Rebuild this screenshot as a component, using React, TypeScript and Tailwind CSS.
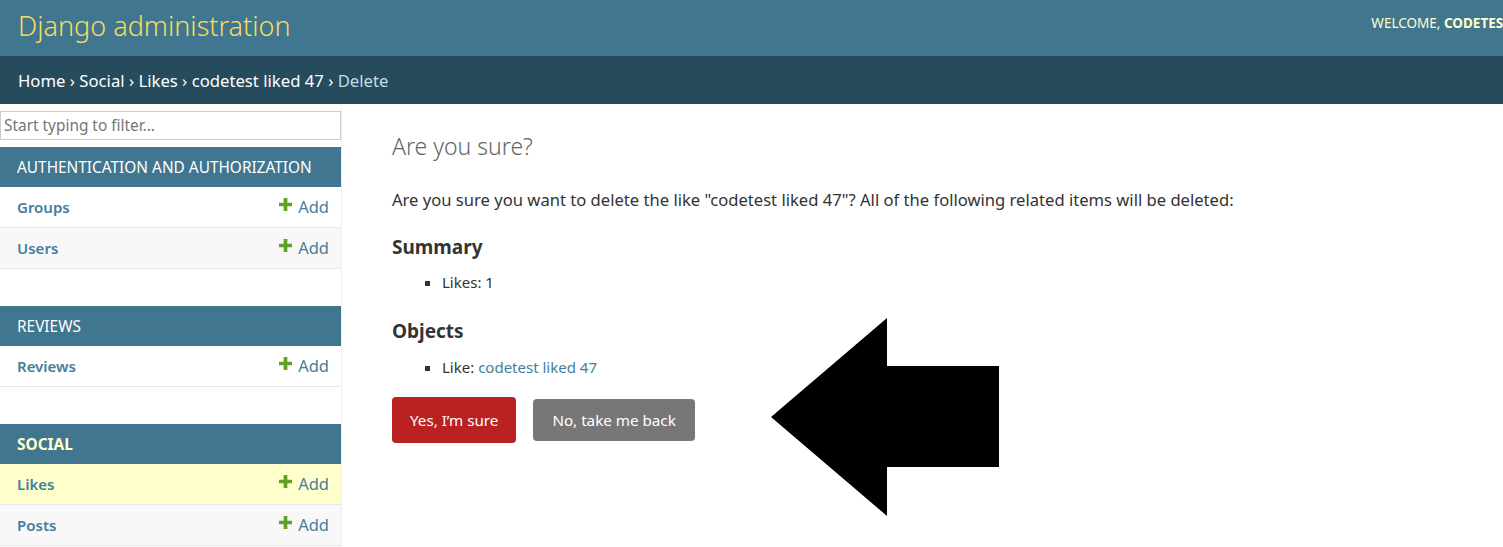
import React from "react";

const font = { fontFamily: '"Segoe UI", "Noto Sans", "Open Sans", sans-serif' };

interface ModelRow {
  name: string;
  current?: boolean;
}

interface AppSection {
  title: string;
  current?: boolean;
  models: ModelRow[];
}

const sections: AppSection[] = [
  {
    title: "Authentication and Authorization",
    models: [{ name: "Groups" }, { name: "Users" }],
  },
  { title: "Reviews", models: [{ name: "Reviews" }] },
  {
    title: "Social",
    current: true,
    models: [{ name: "Likes", current: true }, { name: "Posts" }],
  },
];

function Plus() {
  return (
    <svg width="13" height="13" viewBox="0 0 14 14" className="mr-[6px] -mt-[6px]">
      <path d="M5 0h4v5h5v4H9v5H5V9H0V5h5z" fill="#5fa225" />
    </svg>
  );
}

function Sidebar() {
  return (
    <div className="w-[342px] shrink-0 border-r border-[#eeeeee] pt-[7px]">
      <input
        className="block w-[341px] h-[29px] border border-[#cccccc] px-[3px] text-[15.4px] placeholder-[#757575] outline-none"
        placeholder="Start typing to filter..."
      />
      {sections.map((s, i) => (
        <div key={s.title} className={i === 0 ? "mt-[7px]" : "mt-[37px]"}>
          <div
            className={`h-[40px] bg-[#417690] flex items-center pl-[17px] pt-[1px] text-[15.4px] uppercase ${
              s.current ? "font-bold text-[#ffffcc]" : "text-white"
            }`}
          >
            {s.title}
          </div>
          {s.models.map((m, j) => (
            <div
              key={m.name}
              className={`h-[41px] flex items-center justify-between pl-[17px] pr-[12px] border-b border-[#e8e8e8] text-[15px] ${
                m.current ? "bg-[#ffffcc]" : j % 2 === 1 ? "bg-[#f8f8f8]" : "bg-white"
              }`}
            >
              <span className="font-semibold text-[#447e9b]">{m.name}</span>
              <span className="flex items-center text-[16.5px] text-[#447e9b]">
                <Plus />
                Add
              </span>
            </div>
          ))}
        </div>
      ))}
    </div>
  );
}

export default function App() {
  return (
    <div className="relative w-[1503px] h-[547px] overflow-hidden bg-white" style={font}>
      <div className="h-[56px] bg-[#417690] flex items-center justify-between pl-[18px] whitespace-nowrap">
        <h1 className="text-[27px] font-light text-[#f5dd5d] -mt-[4px]">Django administration</h1>
        <div className="text-[13.5px] text-[#ffffcc] -mt-[10px] -mr-[8px]">
          WELCOME, <strong>CODETEST</strong>
        </div>
      </div>
      <div className="h-[48px] bg-[#264b5d] flex items-center pl-[18px] pt-[2px] text-[16.7px] text-white">
        Home › Social › Likes › codetest liked 47 ›&nbsp;<span className="text-[#c4dce8]">Delete</span>
      </div>
      <div className="flex">
        <Sidebar />
        <div className="pl-[50px] pt-[25px] text-[#333333]">
          <h1 className="text-[23px] font-light text-[#666666]">Are you sure?</h1>
          <p className="mt-[24px] text-[16.6px]">
            Are you sure you want to delete the like "codetest liked 47"? All of the following related items will be
            deleted:
          </p>
          <h2 className="mt-[21px] text-[19px] font-bold">Summary</h2>
          <ul className="mt-[9px] pl-[50px] text-[15px] list-[square]">
            <li>Likes: 1</li>
          </ul>
          <h2 className="mt-[24px] text-[19px] font-bold">Objects</h2>
          <ul className="mt-[10px] pl-[50px] text-[15px] list-[square]">
            <li>
              Like: <span className="text-[#447e9b]">codetest liked 47</span>
            </li>
          </ul>
          <div className="mt-[19px] flex items-center gap-[17px]">
            <button className="h-[46px] px-[18px] rounded-[4px] bg-[#ba2121] text-white text-[15.2px]">
              Yes, I’m sure
            </button>
            <button className="h-[42px] px-[19px] rounded-[4px] bg-[#777777] text-white text-[15.2px]">
              No, take me back
            </button>
          </div>
        </div>
      </div>
      <svg className="absolute left-0 top-0 pointer-events-none" width="1503" height="547">
        <polygon points="771,417 887,318 887,366 999,366 999,467 887,467 887,516" fill="#000" />
      </svg>
    </div>
  );
}
